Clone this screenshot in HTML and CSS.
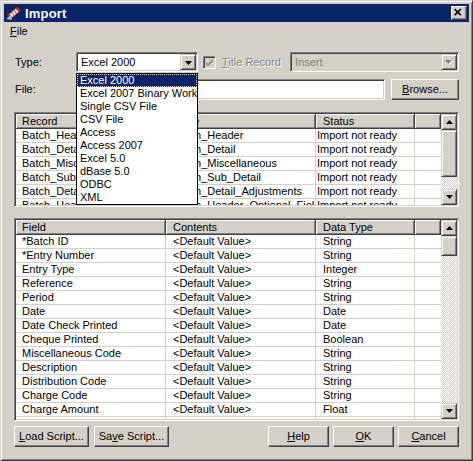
FILE: index.html
```html
<!DOCTYPE html>
<html>
<head>
<meta charset="utf-8">
<title>Import</title>
<link rel="stylesheet" href="styles.css">
</head>
<body>
<div class="window">
  <div class="titlebar">
    <svg class="appicon" viewBox="0 0 16 16" width="16" height="16">
      <g transform="rotate(-40 8 8)">
        <rect x="1" y="5" width="14" height="6" fill="#b03838" stroke="#401818" stroke-width="0.8"/>
        <rect x="4" y="6" width="2" height="4" fill="#fff"/>
        <rect x="7" y="6" width="2" height="4" fill="#fff"/>
        <rect x="10" y="6" width="2" height="4" fill="#fff"/>
      </g>
      <path d="M0 14 L5 10 L6 15 Z" fill="#9cc0e8"/>
    </svg>
    <span class="title">Import</span>
    <div class="closebtn">
      <svg viewBox="0 0 16 14" width="14" height="12"><path d="M3 2.5 L10 9.5 M10 2.5 L3 9.5" stroke="#000" stroke-width="1.8" fill="none"/></svg>
    </div>
  </div>
  <div class="menubar"><span class="menuitem"><u>F</u>ile</span></div>
  <div class="content">
    <div class="row type-row">
      <span class="lbl">Type:</span>
      <div class="combo type-combo">
        <span class="combo-text">Excel 2000</span>
        <span class="combo-btn"><svg viewBox="0 0 7 4" width="7" height="4"><path d="M0 0 H7 L3.5 4 Z" fill="#000"/></svg></span>
        <ul class="droplist">
          <li class="sel">Excel 2000</li>
          <li>Excel 2007 Binary Workbook</li>
          <li>Single CSV File</li>
          <li>CSV File</li>
          <li>Access</li>
          <li>Access 2007</li>
          <li>Excel 5.0</li>
          <li>dBase 5.0</li>
          <li>ODBC</li>
          <li>XML</li>
        </ul>
      </div>
      <span class="checkbox"><svg viewBox="0 0 9 9" width="9" height="9"><path d="M1 4 L3 6 L8 1 V3 L3 8 L1 6 Z" fill="#808080"/></svg></span>
      <span class="disabled-text"><u>T</u>itle Record</span>
      <div class="combo insert-combo disabled">
        <span class="combo-text">Insert</span>
        <span class="combo-btn"><svg viewBox="0 0 8 5" width="8" height="5"><path d="M1 1 H8 L4.5 5 Z" fill="#fff"/><path d="M0 0 H7 L3.5 4 Z" fill="#808080"/></svg></span>
      </div>
    </div>
    <div class="row file-row">
      <span class="lbl">File:</span>
      <div class="textbox"></div>
      <div class="btn browse"><span><u>B</u>rowse...</span></div>
    </div>

    <div class="grid top-grid">
      <div class="gmain">
        <div class="hrow">
          <div class="hc w1">Record</div>
          <div class="hc w2">Table</div>
          <div class="hc w3">Status</div>
          <div class="hc wf"></div>
        </div>
        <div class="r"><div class="c w1">Batch_Header</div><div class="c w2">Batch_Header</div><div class="c w3 st">Import not ready</div><div class="c wf"></div></div>
        <div class="r"><div class="c w1">Batch_Detail</div><div class="c w2">Batch_Detail</div><div class="c w3 st">Import not ready</div><div class="c wf"></div></div>
        <div class="r"><div class="c w1">Batch_Miscellaneous</div><div class="c w2">Batch_Miscellaneous</div><div class="c w3 st">Import not ready</div><div class="c wf"></div></div>
        <div class="r"><div class="c w1">Batch_Sub_Detail</div><div class="c w2">Batch_Sub_Detail</div><div class="c w3 st">Import not ready</div><div class="c wf"></div></div>
        <div class="r"><div class="c w1">Batch_Detail_Adjustments</div><div class="c w2">Batch_Detail_Adjustments</div><div class="c w3 st">Import not ready</div><div class="c wf"></div></div>
        <div class="r"><div class="c w1">Batch_Header_Optional_Fields</div><div class="c w2">Batch_Header_Optional_Fields</div><div class="c w3 st">Import not ready</div><div class="c wf"></div></div>
      </div>
      <div class="vscroll">
        <div class="sbtn"><svg viewBox="0 0 7 4" width="7" height="4"><path d="M0 4 H7 L3.5 0 Z" fill="#000"/></svg></div>
        <div class="thumb thumb-top"></div>
        <div class="track"></div>
        <div class="sbtn"><svg viewBox="0 0 7 4" width="7" height="4"><path d="M0 0 H7 L3.5 4 Z" fill="#000"/></svg></div>
      </div>
    </div>

    <div class="grid bottom-grid">
      <div class="gmain">
        <div class="hrow">
          <div class="hc w1">Field</div>
          <div class="hc w2">Contents</div>
          <div class="hc w3">Data Type</div>
          <div class="hc wf"></div>
        </div>
        <div class="r"><div class="c w1">*Batch ID</div><div class="c w2">&lt;Default Value&gt;</div><div class="c w3">String</div><div class="c wf"></div></div>
        <div class="r"><div class="c w1">*Entry Number</div><div class="c w2">&lt;Default Value&gt;</div><div class="c w3">String</div><div class="c wf"></div></div>
        <div class="r"><div class="c w1">Entry Type</div><div class="c w2">&lt;Default Value&gt;</div><div class="c w3">Integer</div><div class="c wf"></div></div>
        <div class="r"><div class="c w1">Reference</div><div class="c w2">&lt;Default Value&gt;</div><div class="c w3">String</div><div class="c wf"></div></div>
        <div class="r"><div class="c w1">Period</div><div class="c w2">&lt;Default Value&gt;</div><div class="c w3">String</div><div class="c wf"></div></div>
        <div class="r"><div class="c w1">Date</div><div class="c w2">&lt;Default Value&gt;</div><div class="c w3">Date</div><div class="c wf"></div></div>
        <div class="r"><div class="c w1">Date Check Printed</div><div class="c w2">&lt;Default Value&gt;</div><div class="c w3">Date</div><div class="c wf"></div></div>
        <div class="r"><div class="c w1">Cheque Printed</div><div class="c w2">&lt;Default Value&gt;</div><div class="c w3">Boolean</div><div class="c wf"></div></div>
        <div class="r"><div class="c w1">Miscellaneous Code</div><div class="c w2">&lt;Default Value&gt;</div><div class="c w3">String</div><div class="c wf"></div></div>
        <div class="r"><div class="c w1">Description</div><div class="c w2">&lt;Default Value&gt;</div><div class="c w3">String</div><div class="c wf"></div></div>
        <div class="r"><div class="c w1">Distribution Code</div><div class="c w2">&lt;Default Value&gt;</div><div class="c w3">String</div><div class="c wf"></div></div>
        <div class="r"><div class="c w1">Charge Code</div><div class="c w2">&lt;Default Value&gt;</div><div class="c w3">String</div><div class="c wf"></div></div>
        <div class="r"><div class="c w1">Charge Amount</div><div class="c w2">&lt;Default Value&gt;</div><div class="c w3">Float</div><div class="c wf"></div></div>
        <div class="r"><div class="c w1">Tax Group</div><div class="c w2">&lt;Default Value&gt;</div><div class="c w3">String</div><div class="c wf"></div></div>
      </div>
      <div class="vscroll">
        <div class="sbtn"><svg viewBox="0 0 7 4" width="7" height="4"><path d="M0 4 H7 L3.5 0 Z" fill="#000"/></svg></div>
        <div class="thumb thumb-bottom"></div>
        <div class="track"></div>
        <div class="sbtn"><svg viewBox="0 0 7 4" width="7" height="4"><path d="M0 0 H7 L3.5 4 Z" fill="#000"/></svg></div>
      </div>
    </div>

    <div class="buttons">
      <div class="btn script"><span><u>L</u>oad Script...</span></div>
      <div class="btn script"><span>Sa<u>v</u>e Script...</span></div>
      <div class="spacer"></div>
      <div class="btn dlg"><span><u>H</u>elp</span></div>
      <div class="btn dlg"><span><u>O</u>K</span></div>
      <div class="btn dlg"><span><u>C</u>ancel</span></div>
    </div>
  </div>
</div>
</body>
</html>
```

FILE: styles.css
```css
* { box-sizing: border-box; }
html, body { margin: 0; padding: 0; }
body {
  width: 473px;
  height: 461px;
  overflow: hidden;
  background: #d4d0c8;
  font-family: "Liberation Sans", Arial, sans-serif;
  font-size: 11px;
  line-height: 13px;
  color: #000;
}
u { text-decoration: underline; text-underline-offset: 1px; }

.window {
  width: 473px;
  height: 461px;
  background: #d4d0c8;
  border: 1px solid;
  border-color: #d4d0c8 #404040 #404040 #d4d0c8;
  box-shadow: inset 1px 1px #fff, inset -1px -1px #808080;
  padding: 3px;
  display: flex;
  flex-direction: column;
}

.titlebar {
  height: 18px;
  flex-shrink: 0;
  background: #0a246a;
  display: flex;
  align-items: center;
  padding: 0 2px;
  color: #fff;
}
.appicon { width: 16px; height: 16px; flex-shrink: 0; }
.title { font-weight: bold; font-size: 13px; margin-left: 3px; letter-spacing: 0.2px; }
.closebtn {
  margin-left: auto;
  width: 16px;
  height: 14px;
  background: #d4d0c8;
  border: 1px solid;
  border-color: #fff #404040 #404040 #fff;
  box-shadow: inset -1px -1px #808080;
  display: flex;
  align-items: center;
  justify-content: center;
}

.menubar {
  height: 19px;
  flex-shrink: 0;
  display: flex;
  align-items: center;
  padding-left: 6px;
}

.content {
  flex: 1;
  padding: 11px 10px 0 10px;
  display: flex;
  flex-direction: column;
}

.row { display: flex; align-items: center; flex-shrink: 0; }
.type-row { height: 20px; }
.file-row { height: 21px; margin-top: 7px; }
.lbl { width: 62px; padding-left: 1px; flex-shrink: 0; }

.sunken {
  border: 1px solid;
}
.combo, .textbox {
  background: #fff;
  border: 1px solid;
  border-color: #808080 #fff #fff #808080;
  box-shadow: inset 1px 1px #404040, inset -1px -1px #d4d0c8;
}
.combo {
  position: relative;
  height: 20px;
  display: flex;
  align-items: center;
  padding: 1px 1px 1px 1px;
}
.type-combo { width: 122px; }
.combo-text { padding-left: 3px; flex: 1; white-space: nowrap; }
.combo-btn {
  width: 16px;
  height: 16px;
  background: #d4d0c8;
  border: 1px solid;
  border-color: #d4d0c8 #404040 #404040 #d4d0c8;
  box-shadow: inset 1px 1px #fff, inset -1px -1px #808080;
  display: flex;
  align-items: center;
  justify-content: center;
  padding-top: 1px;
}
.insert-combo { width: 169px; margin-left: auto; background: #d4d0c8; }
.insert-combo .combo-text { color: #808080; }

.droplist {
  position: absolute;
  left: -1px;
  top: 20px;
  width: 122px;
  margin: 0;
  padding: 0;
  list-style: none;
  background: #fff;
  border: 1px solid #000;
  z-index: 10;
}
.droplist li {
  height: 13px;
  line-height: 13px;
  padding-left: 3px;
  white-space: nowrap;
  overflow: hidden;
}
.droplist li.sel {
  background: #0a246a;
  color: #fff;
  outline: 1px dotted #e6d68c;
  outline-offset: -1px;
}

.checkbox {
  width: 13px;
  height: 13px;
  margin-left: 5px;
  background: #d4d0c8;
  border: 1px solid;
  border-color: #808080 #fff #fff #808080;
  box-shadow: inset 1px 1px #404040, inset -1px -1px #d4d0c8;
  display: flex;
  align-items: center;
  justify-content: center;
  flex-shrink: 0;
}
.disabled-text {
  margin-left: 6px;
  color: #808080;
  text-shadow: 1px 1px #fff;
  white-space: nowrap;
}

.textbox { width: 309px; height: 21px; }

.btn {
  background: #d4d0c8;
  border: 1px solid;
  border-color: #fff #404040 #404040 #fff;
  box-shadow: inset -1px -1px #808080;
  display: flex;
  align-items: center;
  justify-content: center;
  height: 21px;
  white-space: nowrap;
  flex-shrink: 0;
}
.browse { width: 68px; margin-left: auto; }

.grid {
  flex-shrink: 0;
  background: #fff;
  border: 1px solid;
  border-color: #808080 #fff #fff #808080;
  box-shadow: inset 1px 1px #404040, inset -1px -1px #d4d0c8;
  padding: 1px;
  display: flex;
  overflow: hidden;
}
.top-grid { height: 95px; margin-top: 12px; }
.bottom-grid { height: 203px; margin-top: 11px; }

.gmain {
  flex: 1;
  display: flex;
  flex-direction: column;
  overflow: hidden;
  background: #fff;
}
.hrow { display: flex; height: 15px; flex-shrink: 0; }
.hc {
  background: #d4d0c8;
  border-right: 1px solid #404040;
  border-bottom: 1px solid #404040;
  box-shadow: inset 1px 1px #fff, inset -1px -1px #808080;
  padding: 1px 0 0 6px;
  white-space: nowrap;
  overflow: hidden;
}
.r { display: flex; height: 14px; flex-shrink: 0; }
.c {
  border-right: 1px solid #d4d0c8;
  border-bottom: 1px solid #d4d0c8;
  padding-left: 6px;
  white-space: nowrap;
  overflow: hidden;
  line-height: 13px;
}
.w1 { width: 150px; flex-shrink: 0; }
.w2 { width: 150px; flex-shrink: 0; padding-left: 7px; }
.w3 { width: 99px; flex-shrink: 0; padding-left: 7px; }
.c.st { padding-left: 1px; }
.wf { flex: 1; }
.c.wf { border-right: none; }

.vscroll {
  width: 16px;
  flex-shrink: 0;
  display: flex;
  flex-direction: column;
  background: #d4d0c8;
}
.sbtn, .thumb {
  background: #d4d0c8;
  border: 1px solid;
  border-color: #d4d0c8 #404040 #404040 #d4d0c8;
  box-shadow: inset 1px 1px #fff, inset -1px -1px #808080;
  flex-shrink: 0;
}
.sbtn {
  height: 16px;
  display: flex;
  align-items: center;
  justify-content: center;
}
.thumb-top { height: 47px; }
.thumb-bottom { height: 20px; }
.track {
  flex: 1;
  background: repeating-conic-gradient(#fff 0 25%, #d4d0c8 0 50%) 0 0 / 2px 2px;
}

.buttons {
  display: flex;
  height: 21px;
  margin-top: 5px;
  flex-shrink: 0;
}
.script { width: 75px; margin-right: 5px; }
.spacer { flex: 1; }
.dlg { width: 61px; margin-left: 4px; }
```
